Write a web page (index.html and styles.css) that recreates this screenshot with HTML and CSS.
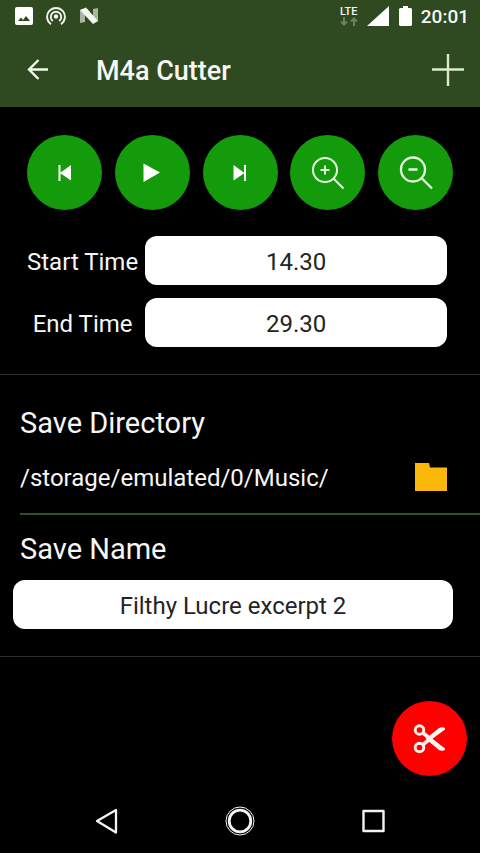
FILE: index.html
```html
<!DOCTYPE html>
<html lang="en">
<head>
<meta charset="utf-8">
<meta name="viewport" content="width=device-width, initial-scale=1">
<title>M4a Cutter</title>
<link rel="stylesheet" href="styles.css">
</head>
<body>
<header class="header">
  <div class="status">
    <div class="status-group notices">
      <svg width="18" height="18" viewBox="0 0 18 18"><path fill="#fff" fill-rule="evenodd" d="M2 0h14a2 2 0 0 1 2 2v14a2 2 0 0 1-2 2H2a2 2 0 0 1-2-2V2a2 2 0 0 1 2-2zM3 14h12l-4-5-3 4-2-2.500z"/></svg>
      <svg width="20" height="20" viewBox="0 0 20 20" fill="none" stroke="#f1f7ec" stroke-width="1.900"><circle cx="10" cy="10.500" r="2.200" fill="#f1f7ec" stroke="none"/><path d="M6.800 15a5.200 5.200 0 1 1 6.400 0M5 18.200a8.900 8.900 0 1 1 10 0"/></svg>
      <svg width="20" height="18" viewBox="0 0 20 18"><path fill="#a9b5a2" d="M1 3l5-1v13l-5 1zM14 2l5-1v13l-5 2z"/><path fill="#f4f8f1" d="M1 3l6-2.500 12 13.500-5 3z"/></svg>
    </div>
    <div class="status-group">
      <div class="network"><span>LTE</span>
        <svg width="18" height="9" viewBox="0 0 18 9" fill="none" stroke="#6d8161" stroke-width="2"><path d="M4 0v8M1 4.500l3 3 3-3M14 9V1M11 4.500l3-3 3 3"/></svg>
      </div>
      <svg class="signal" width="22" height="20" viewBox="0 0 22 20"><path fill="#fff" d="M0 20L22 0v20z"/></svg>
      <svg class="battery" width="13" height="20" viewBox="0 0 13 20"><path fill="#fff" d="M4 0h5v2h3l1 1v16l-1 1H1l-1-1V3l1-1h3z"/></svg>
      <time class="clock">20:01</time>
    </div>
  </div>
  <div class="appbar">
    <button class="icon-button" type="button" aria-label="Back"><svg width="22" height="22" viewBox="0 0 22 22" fill="none" stroke="#f1fae9" stroke-width="2.400"><path d="M21 10.500H1.500M11.500 1L2 10.500l9.500 9.500"/></svg></button>
    <h1 class="title">M4a Cutter</h1>
    <button class="icon-button" type="button" aria-label="Add"><svg width="32" height="32" viewBox="0 0 32 32" fill="none" stroke="#dcebd0" stroke-width="2.400"><path d="M16 0v32M0 15.500h32"/></svg></button>
  </div>
</header>
<main class="main">
  <form class="form">
    <section class="section timing">
      <div class="controls">
        <button class="round" type="button" aria-label="Previous"><svg width="36" height="36" viewBox="0 0 36 36" fill="#fff"><path d="M11.500 10h2v16h-2zM24 10v15.500L13 18z"/></svg></button>
        <button class="round" type="button" aria-label="Play"><svg width="36" height="36" viewBox="0 0 36 36" fill="#fff"><path d="M9.500 8.500v18.500L26 17.500z"/></svg></button>
        <button class="round" type="button" aria-label="Next"><svg width="36" height="36" viewBox="0 0 36 36" fill="#fff"><path d="M22 10h2v16h-2zM11.500 10v15.500L22.500 18z"/></svg></button>
        <button class="round" type="button" aria-label="Zoom in"><svg width="36" height="36" viewBox="0 0 36 36" fill="none" stroke="#e4fbe0" stroke-width="2"><circle cx="15" cy="15" r="12"/><path d="M23.500 23.500L33.500 33.500M15 10.500v9M10.500 15h9"/></svg></button>
        <button class="round" type="button" aria-label="Zoom out"><svg width="36" height="36" viewBox="0 0 36 36" fill="none" stroke="#e4fbe0" stroke-width="2.300"><circle cx="15" cy="14.500" r="12"/><path d="M23.500 23L34 33.500M10.500 14.500h9"/></svg></button>
      </div>
      <div class="fields">
        <label class="label" for="start">Start Time</label>
        <input class="field" id="start" type="text" value="14.30">
        <label class="label" for="end">End Time</label>
        <input class="field" id="end" type="text" value="29.30">
      </div>
    </section>
    <section class="section saving">
      <h2 class="heading">Save Directory</h2>
      <div class="directory">
        <span class="label">/storage/emulated/0/Music/</span>
        <button class="icon-button" type="button" aria-label="Choose folder"><svg width="32" height="28" viewBox="0 0 32 28"><path fill="#fbb80b" d="M0 0h14l1 4.500h17V28H0z"/></svg></button>
      </div>
      <h2 class="heading"><label for="name">Save Name</label></h2>
      <input class="field name" id="name" type="text" value="Filthy Lucre excerpt 2">
    </section>
  </form>
  <button class="round cut" type="button" aria-label="Cut"><svg width="36" height="30" viewBox="0 0 36 30" fill="none" stroke="#fff4f0"><circle cx="7.500" cy="6" r="4.300" stroke-width="2.900"/><circle cx="7.500" cy="23.500" r="4.300" stroke-width="2.900"/><path stroke-width="3.600" d="M11 9l7 5.500M11 20.500l7-5.500"/><path fill="#fff4f0" stroke="none" d="M13.500 14.700L27 4q3-1.500 6 0v1.500L20.500 14.700 33 24.500V26q-3 1.500-6 0z"/></svg></button>
</main>
<nav class="nav" aria-label="System">
  <button class="icon-button" type="button" aria-label="Back"><svg width="30" height="30" viewBox="0 0 30 30" fill="none" stroke="#f4f4f4" stroke-width="2.300" stroke-linejoin="round"><path d="M24 4v22.500L5 15z"/></svg></button>
  <button class="icon-button" type="button" aria-label="Home"><svg width="30" height="30" viewBox="0 0 30 30" fill="none" stroke="#f4f4f4"><circle cx="15" cy="15" r="14"/><circle cx="15" cy="15" r="10.800" stroke-width="2.800"/></svg></button>
  <button class="icon-button" type="button" aria-label="Recents"><svg width="30" height="30" viewBox="0 0 30 30" fill="none" stroke="#f4f4f4" stroke-width="2.400" stroke-linejoin="round"><path d="M5.500 5h20v20h-20z"/></svg></button>
</nav>
</body>
</html>
```
FILE: styles.css
```css
* {
  box-sizing: border-box;
}

body {
  margin: 0;
  min-height: 100vh;
  display: flex;
  flex-direction: column;
  background: #000;
  color: #f7f7f7;
  font-family: Roboto, sans-serif;
  font-size: 24px;
}

svg {
  display: block;
}

h1,
h2 {
  margin: 0;
}

.header {
  background: #2f4920;
}

.status,
.status-group,
.appbar {
  display: flex;
  align-items: center;
}

.status {
  height: 32px;
  padding: 0 11px 0 15px;
  justify-content: space-between;
}

.notices {
  gap: 13px;
}

.network {
  display: flex;
  flex-direction: column;
  align-items: center;
  font-size: 11px;
  line-height: 11px;
  font-weight: 500;
}

.signal {
  margin-left: 9px;
}

.battery {
  margin: 0 9px 0 10px;
}

.clock {
  font-size: 19px;
  font-weight: 500;
}

.appbar {
  height: 75px;
  padding: 0 16px 0 27px;
}

.title {
  flex: 1;
  margin-left: 47px;
  padding-top: 2px;
  font-size: 27px;
  font-weight: 500;
}

.icon-button {
  padding: 0;
  border: 0;
  background: none;
}

.main {
  flex: 1;
  display: flex;
  flex-direction: column;
}

.section {
  border-bottom: 1px solid #2e2e32;
}

.timing {
  padding: 28px 27px 27px;
}

.controls {
  display: flex;
  justify-content: space-between;
}

.round {
  display: grid;
  place-items: center;
  width: 75px;
  height: 75px;
  padding: 0;
  border: 0;
  border-radius: 50%;
  background: #149b0b;
}

.fields {
  display: grid;
  grid-template-columns: auto 1fr;
  align-items: center;
  gap: 13px 7px;
  margin: 26px 6px 0 0;
  text-align: center;
}

.label {
  padding-top: 2px;
}

.field {
  width: 100%;
  height: 49px;
  padding: 2px 12px 0;
  border: 0;
  border-radius: 12px;
  background: #fff;
  color: #242424;
  font: inherit;
  text-align: center;
}

.saving {
  padding: 30px 0 27px;
}

.heading {
  padding-left: 20px;
  font-size: 29px;
  line-height: 36px;
  font-weight: 400;
}

.directory {
  display: flex;
  justify-content: space-between;
  align-items: center;
  height: 74px;
  margin: 0 0 16px 20px;
  padding-right: 33px;
  border-bottom: 2px solid #285522;
}

.name {
  display: block;
  width: auto;
  min-width: calc(100% - 40px);
  margin: 13px 27px 0 13px;
}

.cut {
  align-self: flex-end;
  margin: auto 13px 13px 0;
  background: #fe0000;
}

.nav {
  display: flex;
  justify-content: space-between;
  align-items: center;
  height: 64px;
  padding: 0 92px;
}
```
